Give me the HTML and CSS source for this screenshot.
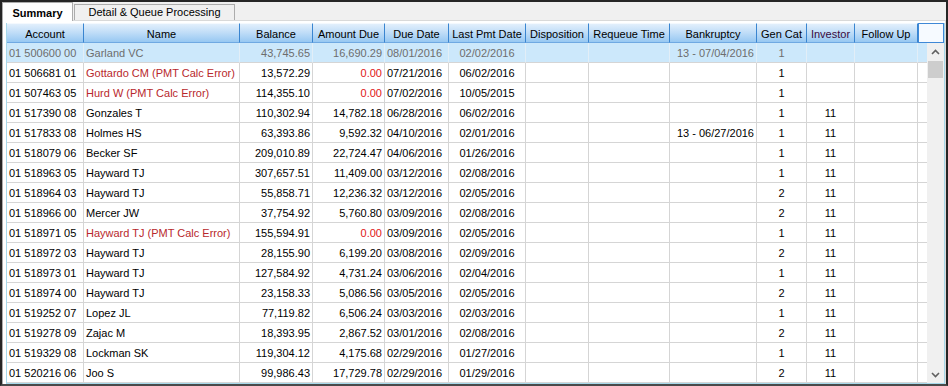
FILE: index.html
```html
<!DOCTYPE html>
<html lang="en">
<head>
    <meta charset="UTF-8">
    <title>Summary</title>
    <link rel="stylesheet" href="styles.css">
</head>
<body>
    <div class="window">
        <div class="tabs">
            <div class="tab active">Summary</div>
            <div class="tab">Detail &amp; Queue Processing</div>
        </div>

        <div class="panel">
            <div class="grid">
                <div class="head">
                    <div>Account</div>
                    <div>Name</div>
                    <div>Balance</div>
                    <div>Amount Due</div>
                    <div>Due Date</div>
                    <div>Last Pmt Date</div>
                    <div>Disposition</div>
                    <div>Requeue Time</div>
                    <div>Bankruptcy</div>
                    <div>Gen Cat</div>
                    <div class="investor">Investor</div>
                    <div>Follow Up</div>
                    <div class="corner"></div>
                </div>

                <div class="body">
                    <div class="rows">
                        <div class="row sel"><span>01 500600 00</span><span>Garland VC</span><span>43,745.65</span><span>16,690.29</span><span>08/01/2016</span><span>02/02/2016</span><span></span><span></span><span>13 - 07/04/2016</span><span>1</span><span></span><span></span><span></span></div>
                        <div class="row"><span>01 506681 01</span><span class="err">Gottardo CM (PMT Calc Error)</span><span>13,572.29</span><span class="zero">0.00</span><span>07/21/2016</span><span>06/02/2016</span><span></span><span></span><span></span><span>1</span><span></span><span></span><span></span></div>
                        <div class="row"><span>01 507463 05</span><span class="err">Hurd W (PMT Calc Error)</span><span>114,355.10</span><span class="zero">0.00</span><span>07/02/2016</span><span>10/05/2015</span><span></span><span></span><span></span><span>1</span><span></span><span></span><span></span></div>
                        <div class="row"><span>01 517390 08</span><span>Gonzales T</span><span>110,302.94</span><span>14,782.18</span><span>06/28/2016</span><span>06/02/2016</span><span></span><span></span><span></span><span>1</span><span>11</span><span></span><span></span></div>
                        <div class="row"><span>01 517833 08</span><span>Holmes HS</span><span>63,393.86</span><span>9,592.32</span><span>04/10/2016</span><span>02/01/2016</span><span></span><span></span><span>13 - 06/27/2016</span><span>1</span><span>11</span><span></span><span></span></div>
                        <div class="row"><span>01 518079 06</span><span>Becker SF</span><span>209,010.89</span><span>22,724.47</span><span>04/06/2016</span><span>01/26/2016</span><span></span><span></span><span></span><span>1</span><span>11</span><span></span><span></span></div>
                        <div class="row"><span>01 518963 05</span><span>Hayward TJ</span><span>307,657.51</span><span>11,409.00</span><span>03/12/2016</span><span>02/08/2016</span><span></span><span></span><span></span><span>1</span><span>11</span><span></span><span></span></div>
                        <div class="row"><span>01 518964 03</span><span>Hayward TJ</span><span>55,858.71</span><span>12,236.32</span><span>03/12/2016</span><span>02/05/2016</span><span></span><span></span><span></span><span>2</span><span>11</span><span></span><span></span></div>
                        <div class="row"><span>01 518966 00</span><span>Mercer JW</span><span>37,754.92</span><span>5,760.80</span><span>03/09/2016</span><span>02/08/2016</span><span></span><span></span><span></span><span>2</span><span>11</span><span></span><span></span></div>
                        <div class="row"><span>01 518971 05</span><span class="err">Hayward TJ (PMT Calc Error)</span><span>155,594.91</span><span class="zero">0.00</span><span>03/09/2016</span><span>02/05/2016</span><span></span><span></span><span></span><span>1</span><span>11</span><span></span><span></span></div>
                        <div class="row"><span>01 518972 03</span><span>Hayward TJ</span><span>28,155.90</span><span>6,199.20</span><span>03/08/2016</span><span>02/09/2016</span><span></span><span></span><span></span><span>2</span><span>11</span><span></span><span></span></div>
                        <div class="row"><span>01 518973 01</span><span>Hayward TJ</span><span>127,584.92</span><span>4,731.24</span><span>03/06/2016</span><span>02/04/2016</span><span></span><span></span><span></span><span>1</span><span>11</span><span></span><span></span></div>
                        <div class="row"><span>01 518974 00</span><span>Hayward TJ</span><span>23,158.33</span><span>5,086.56</span><span>03/05/2016</span><span>02/05/2016</span><span></span><span></span><span></span><span>2</span><span>11</span><span></span><span></span></div>
                        <div class="row"><span>01 519252 07</span><span>Lopez JL</span><span>77,119.82</span><span>6,506.24</span><span>03/03/2016</span><span>02/03/2016</span><span></span><span></span><span></span><span>1</span><span>11</span><span></span><span></span></div>
                        <div class="row"><span>01 519278 09</span><span>Zajac M</span><span>18,393.95</span><span>2,867.52</span><span>03/01/2016</span><span>02/08/2016</span><span></span><span></span><span></span><span>2</span><span>11</span><span></span><span></span></div>
                        <div class="row"><span>01 519329 08</span><span>Lockman SK</span><span>119,304.12</span><span>4,175.68</span><span>02/29/2016</span><span>01/27/2016</span><span></span><span></span><span></span><span>1</span><span>11</span><span></span><span></span></div>
                        <div class="row"><span>01 520216 06</span><span>Joo S</span><span>99,986.43</span><span>17,729.78</span><span>02/29/2016</span><span>01/29/2016</span><span></span><span></span><span></span><span>2</span><span>11</span><span></span><span></span></div>
                    </div>

                    <div class="scrollbar">
                        <div class="arrow">
                            <svg width="9" height="6" viewBox="0 0 9 6"><polyline points="1,5 4.5,1.5 8,5" fill="none" stroke="#606060" stroke-width="1.6"/></svg>
                        </div>
                        <div class="track"><div class="thumb"></div></div>
                        <div class="arrow">
                            <svg width="9" height="6" viewBox="0 0 9 6"><polyline points="1,1 4.5,4.5 8,1" fill="none" stroke="#606060" stroke-width="1.6"/></svg>
                        </div>
                    </div>
                </div>
            </div>
        </div>
    </div>
</body>
</html>
```

FILE: styles.css
```css
* {
    box-sizing: border-box;
}
body {
    margin: 0;
    font-family: "Liberation Sans", Arial, sans-serif;
    font-size: 11px;
    color: #000;
    background: #f0f0f0;
}
.window {
    width: 948px;
    height: 386px;
    border: 2px solid #262626;
    border-bottom-color: #4a4a4a;
    background: #f0f0f0;
    display: flex;
    flex-direction: column;
    overflow: hidden;
}

/* tab strip */
.tabs {
    display: flex;
    align-items: flex-end;
    height: 19px;
}
.tab {
    width: 161px;
    height: 16px;
    margin-left: 1px;
    border: 1px solid #acacac;
    border-bottom: none;
    background: #f0f0f0;
    text-align: center;
    line-height: 15px;
}
.tab.active {
    width: 71px;
    height: 19px;
    margin-left: 0;
    margin-bottom: -1px;
    background: #fff;
    font-weight: bold;
    line-height: 20px;
    position: relative;
    z-index: 1;
}

/* panel + grid */
.panel {
    flex: 1;
    border-top: 1px solid #d9d9d9;
    border-left: 1px solid #acacac;
    border-right: 1px solid #dadada;
    border-bottom: 1px solid #dadada;
    background: #fff;
    padding: 2px 0 1px 3px;
    display: flex;
}
.grid {
    flex: 1;
    display: flex;
    flex-direction: column;
    border: 1px solid #a6d8ea;
    border-top: none;
    overflow: hidden;
}
.head {
    display: grid;
    grid-template-columns: 77px 156px 73px 72px 64px 77px 63px 81px 87px 50px 48px 63px 1fr;
    height: 20px;
}
.head div {
    border-right: 1px solid #3a85d0;
    border-bottom: 1px solid #6fa9e2;
    border-top: 1px solid #f4f9fe;
    background: linear-gradient(#e2effc, #c2def8 45%, #97c8f2);
    text-align: center;
    padding-top: 1px;
    line-height: 18px;
    white-space: nowrap;
    overflow: hidden;
}
.head .investor {
    color: #3a0a40;
}
.head .corner {
    border: 1px solid #3f88d6;
    background: #f6faff;
}

.body {
    flex: 1;
    display: flex;
    overflow: hidden;
}
.rows {
    flex: 1;
    overflow: hidden;
}
.row {
    display: grid;
    grid-template-columns: 77px 156px 73px 72px 64px 77px 63px 81px 87px 50px 48px 63px 1fr;
    height: 20px;
}
.row span {
    border-right: 1px solid #d5d5d5;
    border-bottom: 1px solid #d5d5d5;
    padding: 1px 2px 0;
    line-height: 19px;
    white-space: nowrap;
    overflow: hidden;
}
.row span:last-child {
    border-right: none;
}
.row span:nth-child(3),
.row span:nth-child(4),
.row span:nth-child(9) {
    text-align: right;
}
.row span:nth-child(6),
.row span:nth-child(10),
.row span:nth-child(11) {
    text-align: center;
}
.row.sel {
    background: #cce8fb;
    color: #6d6d6d;
}
.row.sel span {
    border-right-color: #e2eef7;
}
.err {
    color: #b8282c;
}
.zero {
    color: #e01818;
}

/* vertical scrollbar */
.scrollbar {
    width: 17px;
    background: #f0f0f0;
    display: flex;
    flex-direction: column;
}
.arrow {
    height: 17px;
    display: flex;
    align-items: center;
    justify-content: center;
}
.track {
    flex: 1;
    padding: 1px 1px 0;
}
.thumb {
    height: 17px;
    background: #cdcdcd;
}
```
